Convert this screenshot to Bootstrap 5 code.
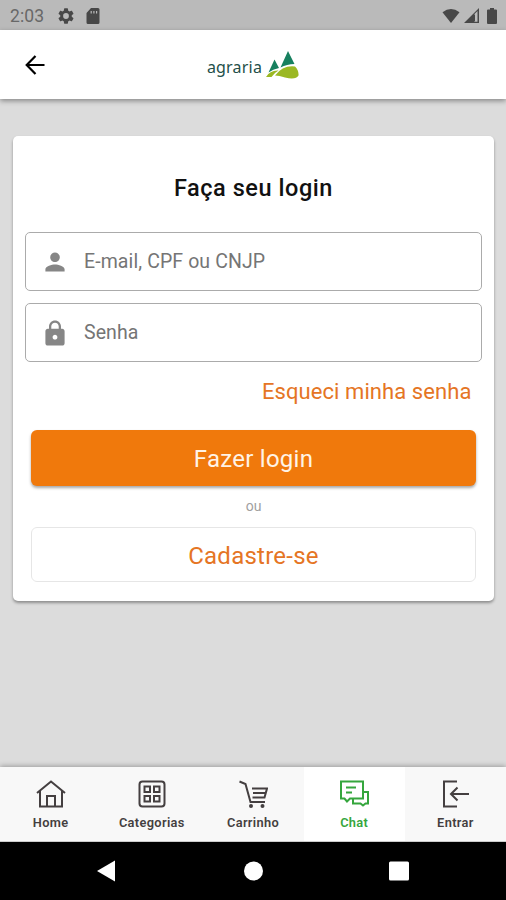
<!DOCTYPE html>
<html lang="pt-BR">
<head>
<meta charset="utf-8">
<meta name="viewport" content="width=device-width, initial-scale=1">
<title>Agraria - Login</title>
<link href="https://cdn.jsdelivr.net/npm/bootstrap@5.3.0/dist/css/bootstrap.min.css" rel="stylesheet">
<style>
body{font-family:Roboto,"Liberation Sans",sans-serif;background:#dcdcdc;height:900px;overflow:hidden;line-height:1.2}
svg{display:block;flex:none}
.status{height:30px;background:#bababa;color:#484848;padding:1px 9px 0 10px}
.clock{font-size:17.5px;color:#686868;letter-spacing:.1px;width:48px;padding-top:2px}
.topbar{height:69px;box-shadow:0 2px 5px rgba(0,0,0,.38);z-index:1}
.brand-name{font-family:"Noto Sans",sans-serif;font-size:16px;letter-spacing:.2px;color:#244f49;line-height:20px;padding-top:5px}
.login{margin:37px 12px 0 13px;height:465px;border-radius:5px;box-shadow:0 2px 3px rgba(0,0,0,.36);padding:0 12px}
.login h1{font-size:23.5px;letter-spacing:.55px;line-height:28px;margin:38px 0 30px;color:#111}
.field{height:59px;border:1px solid #ababab;border-radius:5px;padding:0 17px;color:#868686}
.field + .field{margin-top:12px}
.field input{font-size:19.5px;letter-spacing:.1px;padding:0;margin-left:17px}
.field input,.field input:focus{background:none;box-shadow:none}
.field input::placeholder{color:#757575;opacity:1}
.orange,.orange:hover{color:#e57524}
.forgot{font-size:22px;letter-spacing:.08px;line-height:28px;margin:16px 10.5px 0}
.action{height:55px;margin:24px 6px 0;border-radius:6px;font-size:24px;letter-spacing:.25px;padding:1px 0 0}
.primary,.primary:hover{height:56px;background:#f0790c;color:#fff3e6;box-shadow:0 2px 3px rgba(0,0,0,.35)}
.or{font-size:14px;line-height:18px;color:#a0a0a0;margin:11px 0 12px}
.register{margin-top:0;border:1px solid #e6e6e6;padding-top:2px}
.tabs{height:75px;background:#f8f8f8;box-shadow:0 -1px 5px rgba(0,0,0,.3);border-bottom:1px solid #ccc}
.tab{color:#443f40;font-size:12.8px;font-weight:600;letter-spacing:.35px;padding:12px 0 0;line-height:16px}
.tab svg{margin-bottom:6px}
.tab.current{background:#fff;color:#35a63d}
.system{height:58px;background:#000}
</style>
<script src="https://cdn.jsdelivr.net/npm/bootstrap@5.3.0/dist/js/bootstrap.bundle.min.js"></script>
</head>
<body class="d-flex flex-column">
<div class="status d-flex align-items-center">
  <span class="clock">2:03</span>
  <svg width="16" height="16" viewBox="2 2 20 20" fill="currentColor"><path d="M19.14 12.94c.04-.3.06-.61.06-.94s-.02-.64-.07-.94l2.03-1.58a.49.49 0 0 0 .12-.61l-1.92-3.32a.49.49 0 0 0-.59-.22l-2.39.96a7 7 0 0 0-1.62-.94l-.36-2.54a.48.48 0 0 0-.48-.41h-3.84a.48.48 0 0 0-.47.41l-.36 2.54c-.59.24-1.13.57-1.62.94l-2.39-.96a.49.49 0 0 0-.59.22L2.74 8.87a.48.48 0 0 0 .12.61l2.03 1.58c-.05.3-.09.63-.09.94s.02.64.07.94l-2.03 1.58a.49.49 0 0 0-.12.61l1.92 3.32c.12.22.37.29.59.22l2.39-.96c.5.38 1.03.7 1.62.94l.36 2.54c.05.24.24.41.48.41h3.84c.24 0 .44-.17.47-.41l.36-2.54a7 7 0 0 0 1.62-.94l2.39.96c.22.08.47 0 .59-.22l1.92-3.32a.48.48 0 0 0-.12-.61zM12 15.6A3.6 3.6 0 1 1 12 8.4a3.6 3.6 0 0 1 0 7.2z"/></svg>
  <svg class="ms-2 ps-1" width="18" height="16" viewBox="0 0 14 16" fill="currentColor"><path fill-rule="evenodd" d="M5 0h7q1.500 0 1.500 1.500v13q0 1.500-1.500 1.500H2q-1.500 0-1.500-1.500V5zM4.600 3v2.500h1.200V3zm2.700 0v2.500h1.200V3zM10 3v2.500h1.200V3z"/></svg>
  <div class="ms-auto d-flex align-items-center">
    <svg width="18" height="16" viewBox="0 0 19 16" fill="currentColor"><path d="M.5 4Q9.500-3 18.500 4L9.500 15.500z"/></svg>
    <svg class="ms-1" width="15" height="15" viewBox="0 0 15 15" fill="currentColor"><path fill-rule="evenodd" d="M0 15 15 0v15zM10 6.500V13.700h3.500V3z"/><path d="M10 6.500h1v7h-1z"/></svg>
    <svg class="ms-2" width="10" height="16" viewBox="0 0 10 16" fill="currentColor"><path d="M3 0h4v1.500h2q1 0 1 1V15q0 1-1 1H1q-1 0-1-1V2.500q0-1 1-1h2z"/></svg>
  </div>
</div>
<header class="topbar bg-white position-relative d-grid align-items-center">
  <div class="row g-0 align-items-center">
    <div class="col-4 ps-4"><svg width="22" height="22" viewBox="0 0 22 22" fill="none" stroke="#000" stroke-width="2.200"><path d="M20.500 11H3M11.500 2 2.700 11l8.800 9"/></svg></div>
    <div class="col-4 d-flex justify-content-center align-items-center">
      <span class="brand-name">agraria</span>
      <svg class="ms-1" width="33" height="28" viewBox="0 0 33 28"><path d="M22 0 28.500 13Q21 13 14.500 16.500zM8.500 8.500 13 17Q7 18 2.500 21.500z" fill="#17805f"/><path d="M0 26Q4 19 12.500 19.500 8 22 5.500 26zM9 24.500Q17 14 29 15.500q4 4 3.500 9Q30 29 19 26.500 13 24.500 9 24.500z" fill="#9bb823"/></svg>
    </div>
  </div>
</header>
<main class="flex-grow-1">
  <form class="login bg-white overflow-hidden">
    <h1 class="text-center fw-medium">Faça seu login</h1>
    <div class="field d-flex align-items-center">
      <svg width="24" height="24" viewBox="2 2 20 20" fill="currentColor"><path d="M12 12c2.210 0 4-1.790 4-4s-1.790-4-4-4-4 1.790-4 4 1.790 4 4 4zm0 2c-2.670 0-8 1.340-8 4v2h16v-2c0-2.660-5.330-4-8-4z"/></svg>
      <input class="form-control border-0" type="text" placeholder="E-mail, CPF ou CNJP" aria-label="E-mail, CPF ou CNJP">
    </div>
    <div class="field d-flex align-items-center">
      <svg width="24" height="28" viewBox="2 0 20 23" fill="currentColor"><path d="M18 8h-1V6c0-2.760-2.240-5-5-5S7 3.240 7 6v2H6c-1.100 0-2 .9-2 2v10c0 1.100.9 2 2 2h12c1.100 0 2-.9 2-2V10c0-1.100-.9-2-2-2zm-6 9c-1.100 0-2-.9-2-2s.9-2 2-2 2 .9 2 2-.9 2-2 2zm3.100-9H8.900V6c0-1.710 1.390-3.100 3.100-3.100s3.100 1.390 3.100 3.100z"/></svg>
      <input class="form-control border-0" type="password" placeholder="Senha" aria-label="Senha">
    </div>
    <div class="forgot text-end"><a href="#" class="orange text-decoration-none">Esqueci minha senha</a></div>
    <div class="d-grid"><button type="button" class="btn action primary border-0">Fazer login</button></div>
    <div class="or text-center">ou</div>
    <div class="d-grid"><button type="button" class="btn action register orange">Cadastre-se</button></div>
  </form>
</main>
<nav class="tabs d-flex">
  <a class="tab col d-flex flex-column align-items-center text-decoration-none" href="#">
    <svg width="30" height="30" viewBox="0 0 30 30" fill="none" stroke="currentColor" stroke-width="2"><path d="M1 14 15 2.500 29 14M4 12v15.500h22V12M11 27V17h8v10"/></svg>Home</a>
  <a class="tab col d-flex flex-column align-items-center text-decoration-none" href="#">
    <svg width="30" height="30" viewBox="0 0 30 30" fill="none" stroke="currentColor" stroke-width="2"><rect x="2.500" y="2.500" width="25" height="25" rx="3"/><path d="M7.500 7.500h5.500V13H7.500zM17 7.500h5.500V13H17zM7.500 17h5.500v5.500H7.500zM17 17h5.500v5.500H17z"/></svg>Categorias</a>
  <a class="tab col d-flex flex-column align-items-center text-decoration-none" href="#">
    <svg width="30" height="30" viewBox="0 0 30 30" fill="none" stroke="currentColor" stroke-width="2"><path d="M1.500 2.500 7.500 5 12.500 23H27M14 9.500H29L26.500 18.500H14.500M15 14h12"/><circle cx="13" cy="27" r="1" fill="currentColor"/><circle cx="24.500" cy="27" r="1" fill="currentColor"/></svg>Carrinho</a>
  <a class="tab current col d-flex flex-column align-items-center text-decoration-none" href="#">
    <svg width="30" height="30" viewBox="0 0 30 30" fill="none" stroke="currentColor" stroke-width="2"><path d="M2 2.500h22v17H11L8 22.500 5.500 19.500H2zM7 8.500h10M7 13.500h6M24 13h5v11.500h-2.500L24 26.500 21.500 24.500H14v-4"/></svg>Chat</a>
  <a class="tab col d-flex flex-column align-items-center text-decoration-none" href="#">
    <svg width="30" height="30" viewBox="0 0 30 30" fill="none" stroke="currentColor" stroke-width="2"><path d="M17 2.500H4v25h13M29 15H11M17.500 8.500 11 15l6.500 6.500"/></svg>Entrar</a>
</nav>
<div class="system d-flex align-items-center justify-content-center">
  <svg width="322" height="24" viewBox="0 0 322 24" fill="#fff"><path d="M5 12 23 1.500v21z"/><circle cx="161.500" cy="12" r="9.500"/><rect x="297" y="2.500" width="20" height="19" rx="1.500"/></svg>
</div>
</body>
</html>
